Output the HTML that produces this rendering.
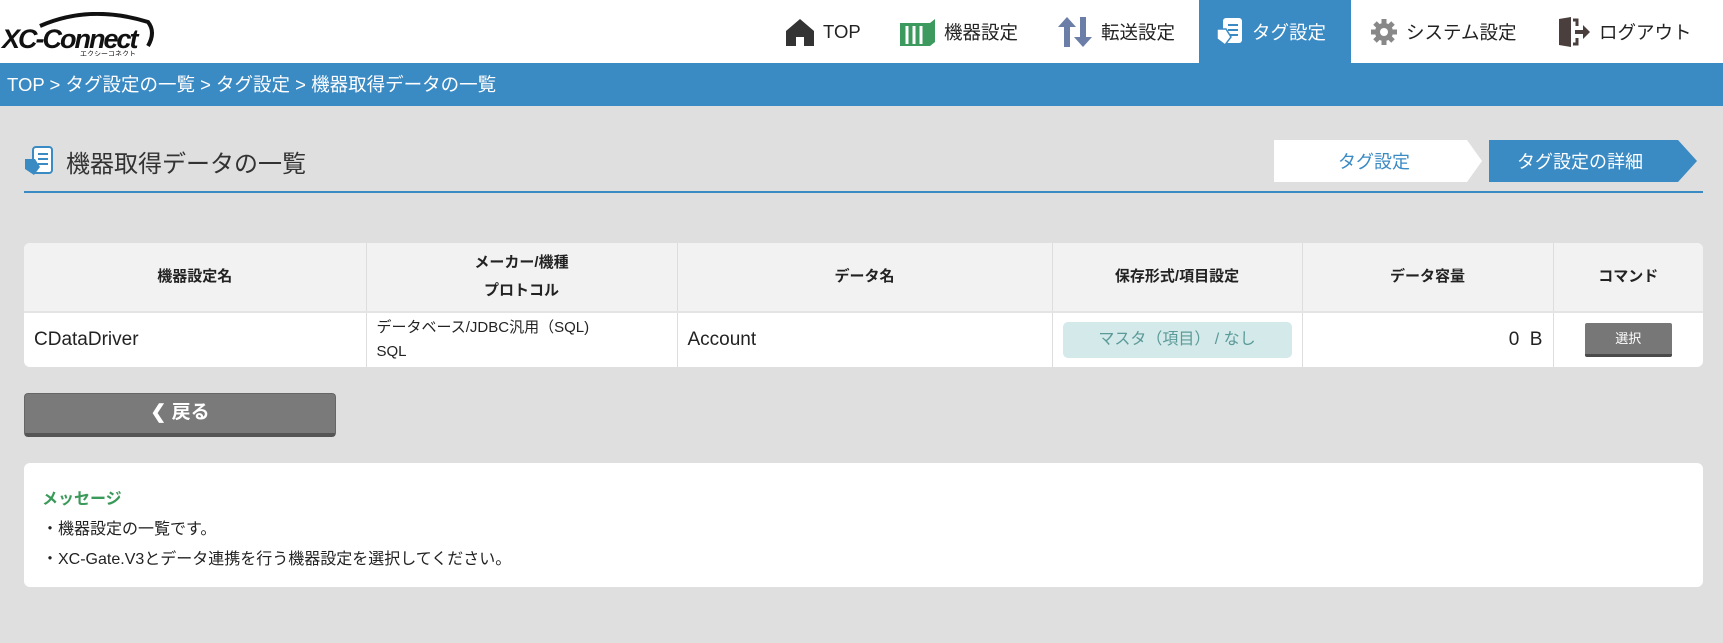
<!DOCTYPE html>
<html><head><meta charset="utf-8">
<style>
*{margin:0;padding:0;box-sizing:border-box}
body{width:1723px;height:643px;overflow:hidden;background:#dfdfdf;font-family:"Liberation Sans","Noto Sans CJK JP",sans-serif;color:#222;position:relative}
.abs{position:absolute}
#hdr{left:0;top:0;width:1723px;height:63px;background:#fff}
#bc{left:0;top:63px;width:1723px;height:43px;background:#3a8ac4;color:#fff;font-size:18.5px;line-height:43px;padding-left:7px}
.nav{top:0;height:63px;display:flex;align-items:center;font-size:18.5px;color:#222}
.nav svg{margin-right:8px}
#act{left:1199px;width:152px;top:0;height:106px;background:#3a8ac4}
.title{left:66px;top:144px;font-size:24px;color:#333}
.line{left:24px;top:191px;width:1679px;height:2px;background:#3a8ac4}
table{position:absolute;left:24px;top:243px;width:1679px;border-collapse:collapse;background:#fff;border-radius:6px;overflow:hidden}
th{background:#f2f2f2;height:69px;font-size:15px;font-weight:bold;border-right:1px solid #ddd;border-bottom:2px solid #e4e4e4;line-height:28px}
td{height:55px;border-right:1px solid #ddd;font-size:19px;padding:0 10px}
th:last-child,td:last-child{border-right:none}
.badge{background:#d4e9e9;color:#5a9a98;font-size:16px;text-align:center;height:36px;line-height:36px;border-radius:5px}
.sel{width:87px;height:34px;margin:0 auto;background:#777;color:#fff;font-size:13px;text-align:center;line-height:31px;border-bottom:3px solid #4a4a4a;border-radius:2px}
.back{left:24px;top:393px;width:312px;height:44px;background:#7a7a7a;border:1px solid #666;border-bottom:4px solid #555;border-radius:4px;color:#fff;font-size:19px;font-weight:bold;text-align:center;line-height:38px}
.msg{left:24px;top:463px;width:1679px;height:124px;background:#fff;border-radius:6px;padding:22px 18px;font-size:16px;line-height:30px;color:#222}
</style></head><body>
<div id="hdr" class="abs"></div>
<div class="abs" style="left:0;top:12px;width:156px;height:44px">
<svg width="156" height="44" viewBox="0 0 156 44"><path d="M40 14 Q90 -8 148 10 Q156 20 148 34" fill="none" stroke="#111" stroke-width="4"/><text x="2" y="36" font-family="Liberation Sans" font-weight="bold" font-style="italic" font-size="27" fill="#111" letter-spacing="-2">XC-Connect</text><text x="80" y="44" font-size="7" font-family="Noto Sans CJK JP" fill="#111">エクシーコネクト</text></svg></div>
<div id="act" class="abs"></div>
<div id="bc" class="abs">TOP &gt; タグ設定の一覧 &gt; タグ設定 &gt; 機器取得データの一覧</div>
<div class="abs nav" style="left:785px"><svg width="30" height="28" viewBox="0 0 30 28"><path d="M15 1 L29 13 V28 H19 V19 H11 V28 H1 V13Z" fill="#333"/></svg>TOP</div>
<div class="abs nav" style="left:898px"><svg width="38" height="28" viewBox="0 0 38 28"><path d="M2 5 H32 L37 1 V24 L32 28 H2Z" fill="#3c9a5f"/><path d="M9 8V26M16 8V26M23 8V26" stroke="#fff" stroke-width="3"/></svg>機器設定</div>
<div class="abs nav" style="left:1057px"><svg width="36" height="30" viewBox="0 0 36 30"><path d="M10 0 L19 10 H13 V30 H7 V10 H1Z" fill="#6a7ea8"/><path d="M26 30 L35 20 H29 V0 H23 V20 H17Z" fill="#6a7ea8"/></svg>転送設定</div>
<div class="abs nav" style="left:1216px;color:#fff"><svg width="28" height="30" viewBox="0 0 28 30"><rect x="7" y="1" width="19" height="25" rx="3" fill="#fff"/><path d="M12 8H22M12 13H22M12 18H22" stroke="#3a8ac4" stroke-width="2"/><path d="M1 12 H10 L15 20 L9 28 L1 22Z" fill="#fff" stroke="#3a8ac4" stroke-width="1.5"/></svg>タグ設定</div>
<div class="abs nav" style="left:1370px"><svg width="28" height="28" viewBox="0 0 28 28"><circle cx="14" cy="14" r="9" fill="#888"/><path d="M14 1V27M1 14H27M5 5L23 23M23 5L5 23" stroke="#888" stroke-width="5"/><circle cx="14" cy="14" r="4" fill="#fff"/></svg>システム設定</div>
<div class="abs nav" style="left:1557px"><svg width="34" height="30" viewBox="0 0 34 30"><path d="M2 2 L14 0 V30 L2 28Z" fill="#4a3f3c"/><path d="M16 3H20V9M20 21V27H16" stroke="#4a3f3c" stroke-width="3" fill="none"/><path d="M18 13H26V8L33 15L26 22V17H18Z" fill="#4a3f3c"/></svg>ログアウト</div>

<svg class="abs" style="left:24px;top:146px" width="30" height="30" viewBox="0 0 30 30"><rect x="9" y="1" width="19" height="26" rx="3" fill="#fff" stroke="#3a8ac4" stroke-width="2"/><path d="M14 8H24M14 13H24M14 18H24" stroke="#3a8ac4" stroke-width="2"/><path d="M1 13 H11 L16 21 L10 29 L1 23Z" fill="#3a8ac4"/></svg>
<div class="abs title">機器取得データの一覧</div>
<svg class="abs" style="left:1274px;top:140px" width="430" height="43"><polygon points="0,0 193,0 208,21 193,42 0,42" fill="#fff"/><polygon points="215,0 404,0 423,21 404,42 215,42" fill="#3a8ac4"/><text x="100" y="28" font-size="18" fill="#3a8ac4" text-anchor="middle" font-family="Noto Sans CJK JP">タグ設定</text><text x="306" y="28" font-size="18" fill="#fff" text-anchor="middle" font-family="Noto Sans CJK JP">タグ設定の詳細</text></svg>
<div class="abs line"></div>

<table>
<tr><th style="width:342px">機器設定名</th><th style="width:311px">メーカー/機種<br>プロトコル</th><th style="width:375px">データ名</th><th style="width:250px">保存形式/項目設定</th><th style="width:251px">データ容量</th><th>コマンド</th></tr>
<tr><td>CDataDriver</td><td style="font-size:15px;line-height:24px">データベース/JDBC汎用（SQL)<br>SQL</td><td>Account</td><td><div class="badge">マスタ（項目） / なし</div></td><td style="text-align:right">0&nbsp; B</td><td><div class="sel">選択</div></td></tr>
</table>

<div class="abs back">&#10094; 戻る</div>
<div class="abs msg"><div style="color:#3a9a5a;font-weight:bold;font-size:16px">メッセージ</div>・機器設定の一覧です。<br>・XC-Gate.V3とデータ連携を行う機器設定を選択してください。</div>
</body></html>
